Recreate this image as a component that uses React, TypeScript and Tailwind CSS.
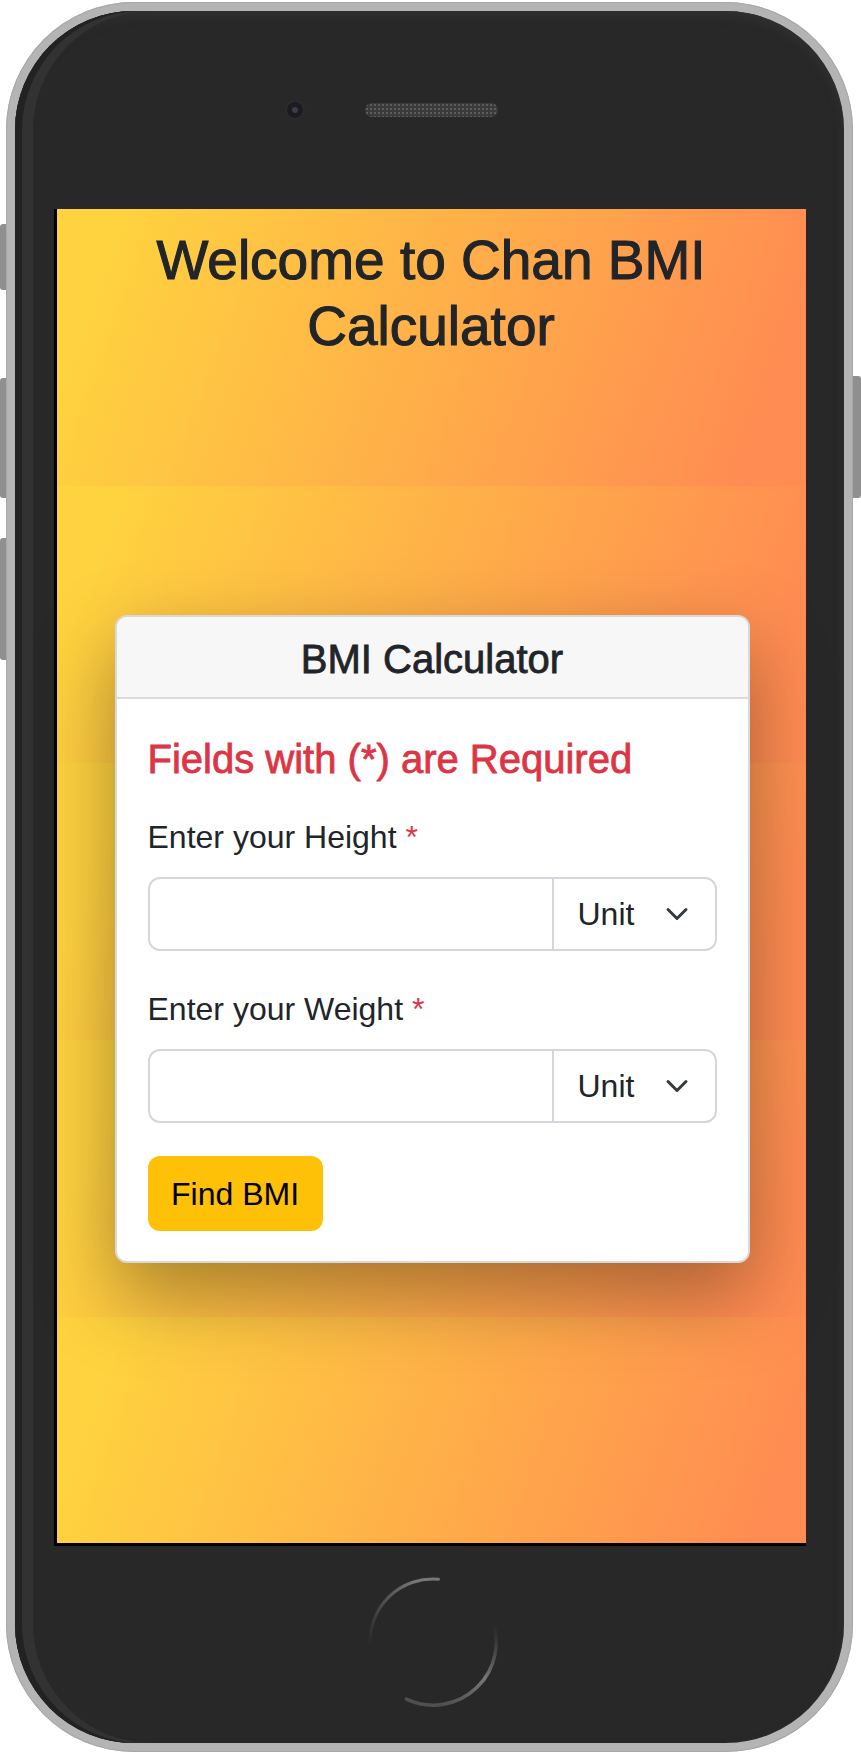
import React from "react";

const Field = ({ label, className }: { label: string; className: string }) => {
  return (
    <div className={className}>
      <label className="block text-[32px] leading-[48px] text-[#212529]">
        {label} <span className="text-[#dc3545]">*</span>
      </label>
      <div className="mt-[16px] flex h-[74px] rounded-[12px] border-2 border-[#d3d7dc] bg-white">
        <input className="min-w-0 flex-1 rounded-l-[10px] bg-transparent px-[24px] text-[32px] outline-none" />
        <div className="flex w-[163px] items-center justify-between border-l-2 border-[#d3d7dc] pl-[24px] pr-[26px] text-[32px] leading-[48px] text-[#212529]">
          <span>Unit</span>
          <svg width="24" height="24" viewBox="0 0 16 16">
            <path
              d="m2 5 6 6 6-6"
              fill="none"
              stroke="#343a40"
              strokeWidth="2"
              strokeLinecap="round"
              strokeLinejoin="round"
            />
          </svg>
        </div>
      </div>
    </div>
  );
};

const HomeButton = () => (
  <svg width="140" height="140" viewBox="0 0 140 140">
    <defs>
      <linearGradient id="arcA" x1="0" y1="1" x2="0.6" y2="0">
        <stop offset="0" stopColor="#5a5a5a" stopOpacity="0" />
        <stop offset="1" stopColor="#777" stopOpacity="1" />
      </linearGradient>
      <linearGradient id="arcB" x1="0.7" y1="0" x2="0.4" y2="1">
        <stop offset="0" stopColor="#5a5a5a" stopOpacity="0" />
        <stop offset="0.6" stopColor="#777" stopOpacity="1" />
        <stop offset="1" stopColor="#6a6a6a" stopOpacity="0.6" />
      </linearGradient>
    </defs>
    <path d="M 7.2 75.5 A 63 63 0 0 1 75.5 7.2" fill="none" stroke="url(#arcA)" strokeWidth="3" strokeLinecap="round" />
    <path d="M 128 45 A 63 63 0 0 1 43.4 127.1" fill="none" stroke="url(#arcB)" strokeWidth="3.5" strokeLinecap="round" />
  </svg>
);

const App = () => {
  return (
    <div className="relative h-[1754px] w-[861px] overflow-hidden bg-white font-['Liberation_Sans',Arial,sans-serif]">
      {/* side buttons */}
      <div className="absolute left-0 top-[224px] h-[66px] w-[10px] rounded-l-[3px] bg-[#8f8f8f]" />
      <div className="absolute left-0 top-[378px] h-[120px] w-[10px] rounded-l-[3px] bg-[#8f8f8f]" />
      <div className="absolute left-0 top-[538px] h-[122px] w-[10px] rounded-l-[3px] bg-[#8f8f8f]" />
      <div className="absolute right-0 top-[376px] h-[122px] w-[12px] rounded-r-[3px] bg-[#8f8f8f]" />

      <div className="relative pl-[6px] pt-[2px]">
        <div className="h-[1750px] w-[847px] rounded-[128px] bg-[#b4b4b4] p-[9px] shadow-[inset_0_0_0_1px_#a8a8a8]">
          <div className="flex h-full flex-col items-center rounded-[119px] bg-[#282828] shadow-[inset_7px_0_0_0_#222,inset_18px_0_0_0_#323232,inset_0_6px_10px_#303030]">
            {/* camera + speaker */}
            <div className="flex h-[198px] w-full items-start pl-[272px] pt-[91px]">
              <div className="flex items-center gap-[62px]">
                <div className="flex h-[16px] w-[16px] items-center justify-center rounded-full bg-[#1b1b20] shadow-[0_0_0_2px_#2c2c30]">
                  <div className="h-[6px] w-[6px] rounded-full bg-[#3c3c4a]" />
                </div>
                <div className="h-[14px] w-[133px] rounded-full bg-[#3a3a3a] bg-[radial-gradient(circle,#5c5c5c_1px,transparent_1.6px)] bg-[length:4px_4px]" />
              </div>
            </div>

            {/* screen */}
            <div className="h-[1337px] w-[752px] border-b-[3px] border-l-[3px] border-black bg-[linear-gradient(110deg,#ffd23f_8%,#ff8c52_92%)] bg-[length:100%_277px] bg-repeat-y">
              <h1 className="px-[24px] pt-[18px] text-center text-[55px] font-normal leading-[66px] text-[#212529] [-webkit-text-stroke:1.1px_#212529]">
                Welcome to Chan BMI Calculator
              </h1>

              <div className="ml-[58px] mt-[256px] w-[635px] rounded-[12px] border-2 border-[#d9d9d9] bg-white shadow-[0_32px_80px_rgba(0,0,0,0.35)]">
                <div className="rounded-t-[10px] border-b-2 border-[#dcdcdc] bg-[#f7f7f7] pb-[14px] pt-[18px] text-center text-[40px] leading-[48px] text-[#212529] [-webkit-text-stroke:0.8px_#212529]">
                  BMI Calculator
                </div>
                <div className="px-[31px] pb-[30px] pt-[36px]">
                  <div className="text-[40px] leading-[48px] text-[#dc3545] [-webkit-text-stroke:0.8px_#dc3545]">
                    Fields with (*) are Required
                  </div>
                  <Field label="Enter your Height" className="mt-[30px]" />
                  <Field label="Enter your Weight" className="mt-[34px]" />
                  <button className="mt-[33px] h-[75px] w-[175px] rounded-[12px] bg-[#ffc107] text-[32px] leading-[48px] text-black">
                    Find BMI
                  </button>
                </div>
              </div>
            </div>

            {/* home button */}
            <div className="ml-[7px] mt-[26px]">
              <HomeButton />
            </div>
          </div>
        </div>
      </div>
    </div>
  );
};

export default App;
